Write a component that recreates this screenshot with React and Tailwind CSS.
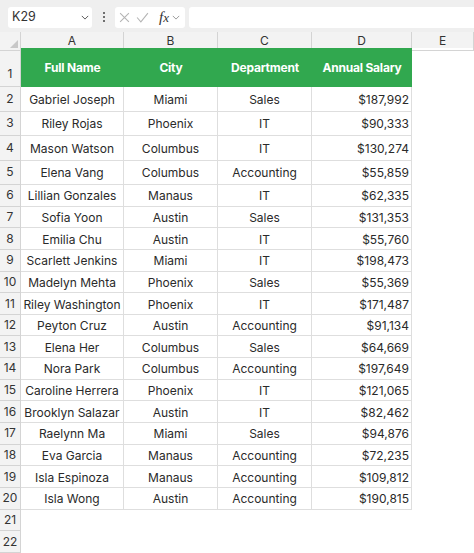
import React from 'react';

const rows = [
  ['Gabriel Joseph', 'Miami', 'Sales', '$187,992'],
  ['Riley Rojas', 'Phoenix', 'IT', '$90,333'],
  ['Mason Watson', 'Columbus', 'IT', '$130,274'],
  ['Elena Vang', 'Columbus', 'Accounting', '$55,859'],
  ['Lillian Gonzales', 'Manaus', 'IT', '$62,335'],
  ['Sofia Yoon', 'Austin', 'Sales', '$131,353'],
  ['Emilia Chu', 'Austin', 'IT', '$55,760'],
  ['Scarlett Jenkins', 'Miami', 'IT', '$198,473'],
  ['Madelyn Mehta', 'Phoenix', 'Sales', '$55,369'],
  ['Riley Washington', 'Phoenix', 'IT', '$171,487'],
  ['Peyton Cruz', 'Austin', 'Accounting', '$91,134'],
  ['Elena Her', 'Columbus', 'Sales', '$64,669'],
  ['Nora Park', 'Columbus', 'Accounting', '$197,649'],
  ['Caroline Herrera', 'Phoenix', 'IT', '$121,065'],
  ['Brooklyn Salazar', 'Austin', 'IT', '$82,462'],
  ['Raelynn Ma', 'Miami', 'Sales', '$94,876'],
  ['Eva Garcia', 'Manaus', 'Accounting', '$72,235'],
  ['Isla Espinoza', 'Manaus', 'Accounting', '$109,812'],
  ['Isla Wong', 'Austin', 'Accounting', '$190,815'],
];

const cols = 'grid grid-cols-[21px_103px_94px_94px_100px_1fr]';

const Chevron = ({ className }) => (
  <svg viewBox="0 0 10 6" className={className} fill="none" stroke="currentColor" strokeWidth="1.2">
    <path d="M1 1l4 4 4-4" />
  </svg>
);

const RowHead = ({ n }) => (
  <div className="flex items-center justify-center bg-[#f3f3f3] border-r border-b border-[#d4d4d4] text-[12px] text-[#333]">
    {n}
  </div>
);

const cell = 'flex items-center pt-[2px] border-r border-b border-[#dedede] text-[12px]';

export default function App() {
  return (
    <div className="w-[474px] h-[553px] overflow-hidden bg-white text-[#2a2a2a]" style={{ fontFamily: 'Inter, "Noto Sans", sans-serif' }}>
      {/* formula bar */}
      <div className="h-[32px] bg-[#efefef] flex items-center pl-[8px] pt-[2px] gap-[4px]">
        <div className="w-[84px] h-[21px] bg-white rounded-[3px] flex items-center justify-between pl-[4px] pr-[3px] text-[12.5px] text-[#333]">
          <span>K29</span>
          <Chevron className="w-[8px] h-[5px] text-[#555]" />
        </div>
        <div className="w-[15px] flex flex-col items-center gap-[2px]">
          <span className="w-[2px] h-[2px] rounded-full bg-[#444]" />
          <span className="w-[2px] h-[2px] rounded-full bg-[#444]" />
          <span className="w-[2px] h-[2px] rounded-full bg-[#444]" />
        </div>
        <div className="w-[70px] h-[21px] bg-white rounded-[3px] flex items-center pl-[4px] gap-[6px]">
          <svg viewBox="0 0 10 10" className="w-[11px] h-[11px]" fill="none" stroke="#b5b5b5" strokeWidth="1">
            <path d="M1 1l8 8M9 1l-8 8" />
          </svg>
          <svg viewBox="0 0 12 10" className="w-[13px] h-[11px]" fill="none" stroke="#b5b5b5" strokeWidth="1">
            <path d="M1 5l3.5 4L11 1" />
          </svg>
          <span className="italic text-[15px] leading-none text-[#333] ml-[4px]" style={{ fontFamily: '"Liberation Serif", serif' }}>
            f<span className="text-[13px]">x</span>
          </span>
          <Chevron className="w-[8px] h-[5px] text-[#999] -ml-[3px]" />
        </div>
        <div className="flex-1 h-[21px] bg-white rounded-l-[3px]" />
      </div>

      {/* column headers */}
      <div className={`${cols} h-[16px] bg-[#f3f3f3] text-[12px] text-[#333]`}>
        <div className="relative border-r border-b border-[#d4d4d4]">
          <svg viewBox="0 0 8 8" className="absolute right-[2px] bottom-[2px] w-[8px] h-[8px]">
            <path d="M8 0L8 8L0 8Z" fill="#c8c8c8" />
          </svg>
        </div>
        {['A', 'B', 'C', 'D', 'E'].map((c) => (
          <div key={c} className="flex items-center justify-center border-r border-b border-[#d4d4d4]">
            {c}
          </div>
        ))}
      </div>

      {/* header row */}
      <div className={`${cols} h-[39px]`}>
        <div className="flex items-end justify-center pb-[3px] bg-[#f3f3f3] border-r border-b border-[#d4d4d4] text-[12px] text-[#333]">1</div>
        {['Full Name', 'City', 'Department', 'Annual Salary'].map((h) => (
          <div key={h} className="flex items-center justify-center bg-[#31a84f] text-white font-bold text-[12px] tracking-[-0.2px]">
            {h}
          </div>
        ))}
        <div />
      </div>

      {rows.map((r, i) => (
        <div key={i} className={`${cols} ${i < 4 ? 'h-[24.5px]' : 'h-[21.65px]'}`}>
          <RowHead n={i + 2} />
          <div className={`${cell} justify-center`}>{r[0]}</div>
          <div className={`${cell} justify-center`}>{r[1]}</div>
          <div className={`${cell} justify-center`}>{r[2]}</div>
          <div className={`${cell} justify-end pr-[2px]`}>{r[3]}</div>
          <div />
        </div>
      ))}

      {[21, 22].map((n) => (
        <div key={n} className={`${cols} h-[21.65px]`}>
          <RowHead n={n} />
        </div>
      ))}
    </div>
  );
}
